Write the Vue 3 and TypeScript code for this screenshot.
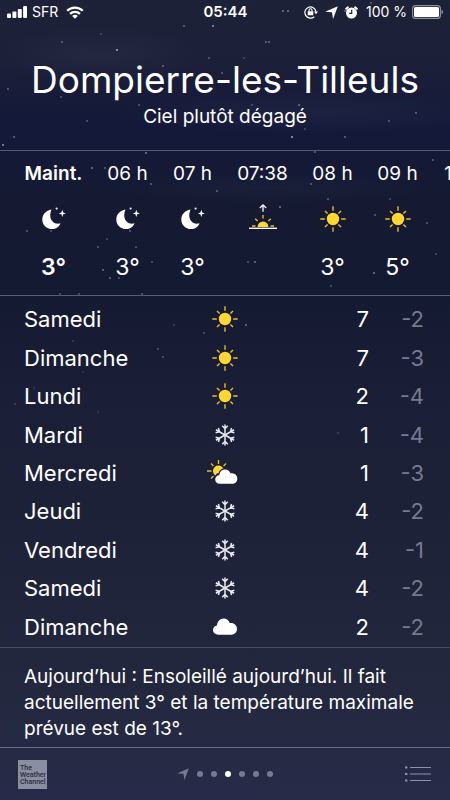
<script setup lang="ts">
type Icon = 'moon' | 'sunrise' | 'sun' | 'snow' | 'partly' | 'cloud'

interface Hour {
  label: string
  icon: Icon
  temp: string
  size: 'now' | 'event' | 'hour'
}

interface Day {
  name: string
  icon: Icon
  high: number
  low: number
}

const hours: Hour[] = [
  { label: 'Maint.', icon: 'moon', temp: '3°', size: 'now' },
  { label: '06 h', icon: 'moon', temp: '3°', size: 'hour' },
  { label: '07 h', icon: 'moon', temp: '3°', size: 'hour' },
  { label: '07:38', icon: 'sunrise', temp: '', size: 'event' },
  { label: '08 h', icon: 'sun', temp: '3°', size: 'hour' },
  { label: '09 h', icon: 'sun', temp: '5°', size: 'hour' },
  { label: '10 h', icon: 'sun', temp: '7°', size: 'hour' },
]

const days: Day[] = [
  { name: 'Samedi', icon: 'sun', high: 7, low: -2 },
  { name: 'Dimanche', icon: 'sun', high: 7, low: -3 },
  { name: 'Lundi', icon: 'sun', high: 2, low: -4 },
  { name: 'Mardi', icon: 'snow', high: 1, low: -4 },
  { name: 'Mercredi', icon: 'partly', high: 1, low: -3 },
  { name: 'Jeudi', icon: 'snow', high: 4, low: -2 },
  { name: 'Vendredi', icon: 'snow', high: 4, low: -1 },
  { name: 'Samedi', icon: 'snow', high: 4, low: -2 },
  { name: 'Dimanche', icon: 'cloud', high: 2, low: -2 },
]

const pages = [1, 2, 3, 4, 5, 6]
const currentPage = 3

// x, y, opacity
const stars: [number, number, number][] = [
  [184, 26, 0.4], [213, 26, 0.7], [101, 34, 0.25], [62, 42, 0.4], [117, 50, 0.8],
  [209, 58, 0.4], [163, 66, 0.45], [222, 73, 0.4], [8, 89, 0.45], [61, 97, 0.35],
  [139, 105, 0.35], [87, 121, 0.35], [14, 137, 0.45], [3, 145, 0.7], [283, 11, 0.5],
  [288, 11, 0.5], [345, 11, 0.4], [371, 3, 0.4], [266, 42, 0.45], [269, 42, 0.45],
  [244, 58, 0.25], [299, 105, 0.5], [252, 105, 0.3], [416, 113, 0.45], [389, 121, 0.4],
  [305, 129, 0.3], [292, 137, 0.8], [345, 137, 0.45], [146, 153, 0.55], [92, 168, 0.5],
  [105, 168, 0.4], [151, 184, 0.4], [217, 191, 0.4], [27, 231, 0.35], [51, 231, 0.35],
  [130, 231, 0.4], [107, 239, 0.3], [98, 247, 0.4], [136, 247, 0.4], [152, 262, 0.35],
  [103, 270, 0.5], [110, 278, 0.45], [119, 278, 0.35], [60, 294, 0.35], [79, 294, 0.35],
  [142, 294, 0.4], [315, 152, 0.4], [433, 160, 0.4], [311, 184, 0.4], [328, 199, 0.4],
  [280, 207, 0.55], [390, 199, 0.3], [375, 215, 0.4], [427, 223, 0.4], [436, 254, 0.3],
  [248, 262, 0.35], [255, 262, 0.5], [374, 273, 0.5], [331, 286, 0.35], [246, 325, 0.5],
  [204, 333, 0.35], [174, 325, 0.25], [158, 349, 0.35], [163, 357, 0.35], [73, 341, 0.2],
  [83, 372, 0.15], [15, 404, 0.25], [34, 388, 0.15], [98, 412, 0.15], [338, 433, 0.2],
]
</script>

<template>
  <main class="screen">
    <svg class="sky" aria-hidden="true">
      <circle v-for="([x, y, o], i) in stars" :key="i" :cx="x" :cy="y" r="1" fill="#c8cee6" :opacity="o" />
    </svg>

    <svg class="defs" width="0" height="0" aria-hidden="true">
      <symbol id="moon" viewBox="0 0 30 30">
        <path fill="#fff" d="M12.6 5.400C7 6 3.300 10.500 3.300 15.500C3.300 21 7.600 25.100 12.900 25.100C17 25.100 20.200 22.900 21.500 19.300C16.300 21 11.700 17.500 11.300 12.300C11.100 9.600 11.600 7.400 12.600 5.400Z" />
        <circle cx="17.600" cy="4.600" r="1.100" fill="#e8eaf4" />
        <path fill="#fff" d="M23.300 5.800L24.200 8.500L26.900 9.400L24.200 10.300L23.300 13L22.400 10.300L19.700 9.400L22.400 8.500Z" />
      </symbol>
      <symbol id="sun" viewBox="0 0 30 30">
        <circle cx="15" cy="15" r="6.200" fill="#ffd633" />
        <path stroke="#e3bd38" stroke-width="1.400" d="M15 2.300V6.800M15 23.200V27.700M2.300 15H6.800M23.200 15H27.700M7 7L9.600 9.600M20.400 20.400L23 23M7 23L9.600 20.400M20.400 9.600L23 7" />
      </symbol>
      <symbol id="sunrise" viewBox="0 0 30 30">
        <path fill="none" stroke="#e9ebf3" stroke-width="1.400" d="M15 7.800V0.800M11.800 4L15 0.900L18.200 4" />
        <path fill="#ffd633" d="M9.600 23A5.400 5.600 0 0 1 20.400 23Z" />
        <path stroke="#e3bd38" stroke-width="1.400" d="M15 11V14.500M7.200 14.700L9.600 17.100M22.800 14.700L20.400 17.100M4 22H7.500M22.500 22H26" />
        <path stroke="#fff" stroke-width="1.400" d="M1 24.300H29" />
      </symbol>
      <symbol id="snow" viewBox="0 0 30 30">
        <g fill="none" stroke="#e8e9f1" stroke-width="1.500">
          <path d="M15 4.500V25.500M12.200 5.800L15 8.600L17.800 5.800M12.200 24.200L15 21.400L17.800 24.200" />
          <path transform="rotate(60 15 15)" d="M15 4.500V25.500M12.200 5.800L15 8.600L17.800 5.800M12.200 24.200L15 21.400L17.800 24.200" />
          <path transform="rotate(120 15 15)" d="M15 4.500V25.500M12.200 5.800L15 8.600L17.800 5.800M12.200 24.200L15 21.400L17.800 24.200" />
        </g>
      </symbol>
      <symbol id="cloud" viewBox="0 0 30 30">
        <path fill="#fff" d="M8.500 22.700C5.200 22.700 3 20.700 3 18.100C3 15.700 4.700 13.800 7 13.400C7.300 9.500 9.900 6.500 13.700 6.500C16.600 6.500 18.700 8 19.700 11C23.800 10.400 27 13 27 16.800C27 20.300 24.500 22.700 21.300 22.700Z" />
      </symbol>
      <symbol id="partly" viewBox="0 0 30 30" overflow="visible">
        <path stroke="#e3bd38" stroke-width="1.400" d="M8.500 2V6M-3 13H1.500M1 5.500L3.500 8M16 5.500L13.600 8M1 20.500L3.500 18" />
        <path fill="#ffd633" d="M13.300 10.400A5.500 5.500 0 1 0 5.500 17.600C6.100 15.900 7.300 15.200 8.700 14.900C9.300 12.300 11 10.900 13.300 10.400Z" />
        <path fill="#fff" d="M9.800 25.800C7 25.800 5.200 24.100 5.200 21.600C5.200 18.900 7 17.300 9.300 17C9.700 13.500 12 11.400 15 11.400C17.700 11.400 19.600 12.700 20.500 15.200C24.500 14.700 27.300 17 27.300 20.400C27.300 23.600 25.100 25.800 22 25.800Z" />
      </symbol>
      <symbol id="arrow" viewBox="0 0 14 14">
        <path fill="currentColor" d="M13.800 0.200L8.700 14L7.500 6.800L0.200 6.300Z" />
      </symbol>
    </svg>

    <div class="status">
      <div class="status-side">
        <svg width="20" height="12" viewBox="0 0 20 12" aria-hidden="true">
          <g fill="#fff">
            <rect x="0" y="7.500" width="4" height="4.500" rx="1" />
            <rect x="5.400" y="5.500" width="4" height="6.500" rx="1" />
            <rect x="10.800" y="3" width="4" height="9" rx="1" />
            <rect x="16.100" y="0" width="3.900" height="12" rx="1" />
          </g>
        </svg>
        <span>SFR</span>
        <svg class="wifi" width="18" height="13" viewBox="0 0 18 13" aria-hidden="true">
          <path fill="none" stroke="#fff" stroke-width="2.300" d="M1.200 4.800C5.500 0.500 12.500 0.500 16.800 4.800M4.100 7.900C6.800 5.100 11.200 5.100 13.900 7.900" />
          <path fill="#fff" d="M9 12.700L6.200 9.900C7.700 8.400 10.300 8.400 11.800 9.900Z" />
        </svg>
      </div>
      <time class="clock">05:44</time>
      <div class="status-side status-right">
        <svg width="14" height="14" viewBox="0 0 14 14" aria-hidden="true">
          <path fill="none" stroke="#fff" stroke-width="1.200" d="M10.200 11.700A5.600 5.600 0 1 1 12 6.600" />
          <path fill="#fff" d="M10 6.500H14L12 9.200ZM3.700 6.200H9.300V10.200H3.700Z" />
          <path fill="none" stroke="#fff" stroke-width="1.100" d="M5 6.500V5.200A1.500 1.500 0 0 1 8 5.200V6.500" />
        </svg>
        <svg class="locate" width="13" height="13"><use href="#arrow" /></svg>
        <svg class="alarm" width="13" height="13" viewBox="0 0 13 13" aria-hidden="true">
          <circle cx="6.500" cy="7" r="5.500" fill="#fff" />
          <path stroke="#fff" stroke-width="2" stroke-linecap="round" d="M1.200 2.800L2.900 1.300M11.800 2.800L10.100 1.300" />
          <path fill="none" stroke="#1b1f37" stroke-width="1.200" d="M6.700 3.800V7.300H4.200" />
        </svg>
        <span>100 %</span>
        <svg class="battery" width="32" height="14" viewBox="0 0 32 14" aria-hidden="true">
          <rect x="0.600" y="0.600" width="27.800" height="12.800" rx="3" fill="none" stroke="#8f92a1" stroke-width="1.100" />
          <rect x="2" y="2" width="25" height="10" rx="1.500" fill="#fff" />
          <path fill="#8f92a1" d="M29.500 4.800C31.500 5.500 31.500 8.500 29.500 9.200Z" />
        </svg>
      </div>
    </div>

    <header class="place">
      <h1>Dompierre-les-Tilleuls</h1>
      <p>Ciel plutôt dégagé</p>
    </header>

    <section class="hourly" aria-label="Prévisions horaires">
      <div v-for="h in hours" :key="h.label" class="hour" :class="h.size">
        <span class="hour-label">{{ h.label }}</span>
        <svg class="icon" width="30" height="30"><use :href="'#' + h.icon" /></svg>
        <span class="hour-temp">{{ h.temp }}</span>
      </div>
    </section>

    <table class="daily">
      <tbody>
        <tr v-for="(d, i) in days" :key="i">
          <th scope="row">{{ d.name }}</th>
          <td><svg class="icon" width="30" height="30"><use :href="'#' + d.icon" /></svg></td>
          <td class="high">{{ d.high }}</td>
          <td class="low">{{ d.low }}</td>
        </tr>
      </tbody>
    </table>

    <p class="summary">Aujourd’hui : Ensoleillé aujourd’hui. Il fait actuellement 3° et la température maximale prévue est de 13°.</p>

    <footer class="toolbar">
      <a class="channel" href="#">The<br />Weather<br />Channel</a>
      <nav class="pager" aria-label="Villes">
        <svg class="pager-arrow" width="12" height="12"><use href="#arrow" /></svg>
        <button v-for="p in pages" :key="p" type="button" class="dot" :class="{ active: p === currentPage }" :aria-label="'Page ' + p"></button>
      </nav>
      <button type="button" class="list" aria-label="Liste des villes">
        <svg width="28" height="18" viewBox="0 0 28 18" aria-hidden="true">
          <path stroke="#8f92a6" stroke-width="2" d="M1 2.500H3.400M1 9H3.400M1 15.500H3.400" />
          <path stroke="#8f92a6" stroke-width="1.200" d="M6 2.500H27M6 9H27M6 15.500H27" />
        </svg>
      </button>
    </footer>
  </main>
</template>

<style>
body {
  margin: 0;
  background: #262a47;
}
</style>

<style scoped>
.screen {
  position: relative;
  display: flex;
  flex-direction: column;
  min-height: 100vh;
  overflow: hidden;
  color: #fff;
  font-family: Inter, "Liberation Sans", sans-serif;
  background:
    radial-gradient(ellipse 110px 30px at 22% 55px, rgba(85, 90, 110, 0.15), transparent),
    radial-gradient(ellipse 190px 22px at 68% 112px, rgba(75, 82, 115, 0.15), transparent),
    radial-gradient(ellipse 180px 16px at 60% 188px, rgba(70, 80, 115, 0.1), transparent),
    linear-gradient(#1e2238 0, #1b1f38 60px, #14183a 130px, #151a32 200px, #151a33 290px, #1a1e36 400px, #21253b 620px, #24283f 700px, #272b49 800px);
}

.sky {
  position: absolute;
  inset: 0;
  width: 100%;
  height: 100%;
}

.defs {
  position: absolute;
}

.status,
.place,
.hourly,
.daily,
.summary,
.toolbar {
  position: relative;
}

.icon {
  display: block;
  overflow: visible;
}

.status {
  display: grid;
  grid-template-columns: 1fr auto 1fr;
  align-items: center;
  height: 24px;
  padding: 0 6px 0 7px;
  font-size: 14px;
  line-height: 24px;
}

.status-side {
  display: flex;
  align-items: center;
  gap: 5px;
}

.wifi {
  margin-left: 3px;
}

.status-right {
  justify-content: flex-end;
}

.locate,
.alarm {
  margin-left: 2px;
}

.alarm {
  margin-right: 3px;
}

.clock {
  font-size: 15px;
  font-weight: 600;
}

.place {
  height: 126px;
  padding-top: 32px;
  box-sizing: border-box;
  text-align: center;
}

.place h1 {
  margin: 0;
  font-size: 37px;
  font-weight: 400;
  line-height: 48px;
  white-space: nowrap;
}

.place p {
  margin: 0;
  font-size: 19px;
  line-height: 26px;
}

.hourly {
  display: flex;
  gap: 24px;
  padding: 9px 0 12px 24px;
  border-top: 1px solid #585c70;
  border-bottom: 1px solid #585c70;
  overflow: hidden;
}

.hour {
  display: flex;
  flex: none;
  flex-direction: column;
  align-items: center;
  width: 41px;
  font-size: 19px;
  white-space: nowrap;
}

.hour.now {
  width: 59px;
  font-weight: 600;
}

.hour.event {
  width: 51px;
}

.hour-label {
  line-height: 28px;
}

.hour .icon {
  margin-top: 16px;
}

.hour-temp {
  height: 32px;
  margin-top: 17px;
  font-size: 23px;
  line-height: 32px;
}

.daily {
  display: flex;
  flex: 1;
  flex-direction: column;
  padding: 4px 26px 1px 24px;
  font-size: 22px;
}

.daily tbody {
  display: flex;
  flex: 1;
  flex-direction: column;
}

.daily tr {
  display: grid;
  flex: 1;
  grid-template-columns: calc(50% - 14px) 30px 1fr 55px;
  align-items: center;
  min-height: 38px;
}

.daily th,
.daily td {
  padding: 0;
  font-weight: 400;
  line-height: 28px;
}

.daily th {
  text-align: left;
}

.daily .high,
.daily .low {
  text-align: right;
}

.low {
  color: #767a8c;
}

.summary {
  margin: 0;
  padding: 16px 20px 5px 24px;
  border-top: 1px solid #484c61;
  border-bottom: 1px solid #6a6e83;
  font-size: 19px;
  line-height: 26px;
}

.toolbar {
  display: grid;
  grid-template-columns: 1fr auto 1fr;
  align-items: center;
  height: 52px;
  padding: 0 18px;
}

.channel {
  display: block;
  width: 27px;
  height: 24px;
  padding: 5px 0 0 2px;
  background: #8b8e9e;
  color: #272b45;
  font-family: Roboto, sans-serif;
  font-size: 7px;
  font-weight: 500;
  line-height: 7px;
  text-decoration: none;
}

.pager {
  display: flex;
  align-items: center;
  gap: 8px;
}

.pager-arrow {
  color: #777b90;
}

.dot {
  width: 6px;
  height: 6px;
  padding: 0;
  border: 0;
  border-radius: 50%;
  background: #777b90;
}

.dot.active {
  background: #fff;
}

.list {
  justify-self: end;
  padding: 0;
  border: 0;
  background: none;
}

.list svg {
  display: block;
}
</style>
